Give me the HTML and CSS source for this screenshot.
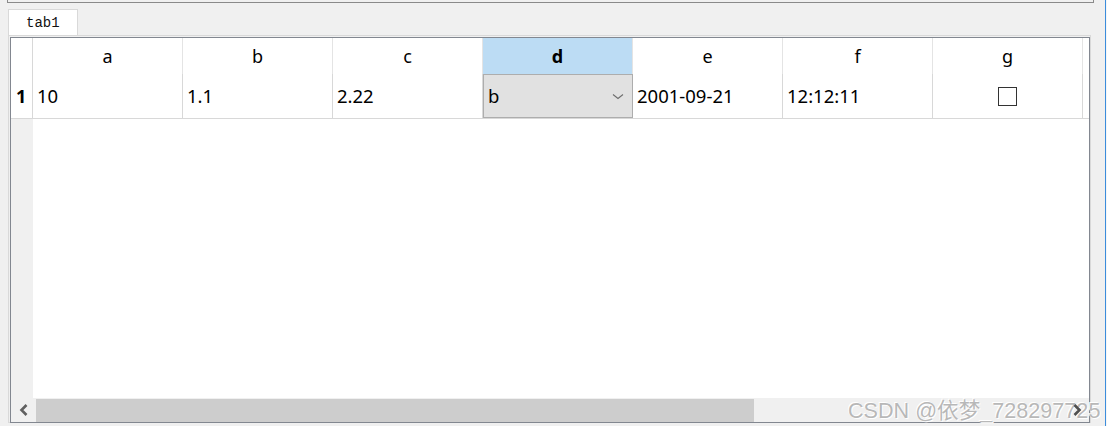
FILE: index.html
```html
<!DOCTYPE html>
<html>
<head>
<meta charset="utf-8">
<link rel="stylesheet" href="styles.css">
</head>
<body>
<div class="window">
  <div class="main">
    <div class="topframe"></div>
    <div class="tabbar"><div class="tab">tab1</div></div>
    <div class="pane">
      <div class="table">
        <div class="hrow">
          <div class="corner"></div>
          <div class="hcell">a</div>
          <div class="hcell">b</div>
          <div class="hcell">c</div>
          <div class="hcell sel">d</div>
          <div class="hcell">e</div>
          <div class="hcell">f</div>
          <div class="hcell">g</div>
          <div class="hfill"></div>
        </div>
        <div class="row">
          <div class="vh">1</div>
          <div class="cell">10</div>
          <div class="cell">1.1</div>
          <div class="cell">2.22</div>
          <div class="cell combo-cell">
            <div class="combo">
              <span>b</span>
              <svg class="chev" width="12" height="7" viewBox="0 0 12 7"><path d="M1 1.5 L6 5.5 L11 1.5" fill="none" stroke="#6d6d6d" stroke-width="1.1"/></svg>
            </div>
          </div>
          <div class="cell">2001-09-21</div>
          <div class="cell">12:12:11</div>
          <div class="cell center"><span class="check"></span></div>
          <div class="rfill"></div>
        </div>
        <div class="body">
          <div class="vfill"></div>
          <div class="bfill"></div>
        </div>
        <div class="hscroll">
          <div class="sbtn">
            <svg width="12" height="14" viewBox="0 0 12 14"><path d="M8.5 2 L3.5 7 L8.5 12" fill="none" stroke="#606060" stroke-width="2.6"/></svg>
          </div>
          <div class="track"><div class="thumb"></div></div>
          <div class="sbtn">
            <svg width="12" height="14" viewBox="0 0 12 14"><path d="M3.5 2 L8.5 7 L3.5 12" fill="none" stroke="#505050" stroke-width="2.6"/></svg>
          </div>
        </div>
      </div>
    </div>
  </div>
  <div class="vline"></div>
  <div class="edge"></div>
  <div class="watermark">CSDN @依梦_728297725</div>
</div>
</body>
</html>
```
FILE: styles.css
```css
html, body {
  margin: 0;
  padding: 0;
  background: #f0f0f0;
}
.window {
  position: relative;
  display: flex;
  width: 1107px;
  height: 426px;
  overflow: hidden;
  font-family: "Noto Sans", "Noto Sans CJK SC", sans-serif;
  color: #000;
}
.main {
  width: 1105px;
  flex: none;
}
.vline {
  width: 1px;
  background: #3c8ddc;
  flex: none;
}
.edge {
  width: 1px;
  background: #f6f6f6;
  flex: none;
}
.topframe {
  margin-left: 7px;
  width: 1085px;
  height: 2px;
  border: 1px solid #8a8a8a;
  border-top: none;
}
.tabbar {
  margin-top: 6px;
  padding-left: 8px;
  height: 26px;
}
.tab {
  width: 70px;
  height: 26px;
  box-sizing: border-box;
  background: #fff;
  border: 1px solid #d9d9d9;
  border-bottom: none;
  font-family: "Liberation Mono", monospace;
  font-size: 14px;
  line-height: 26px;
  padding-left: 17px;
  color: #111;
}
.pane {
  margin-left: 8px;
  width: 1083px;
  height: 388px;
  box-sizing: border-box;
  border: 1px solid #d9d9d9;
  padding: 1px;
}
.table {
  width: 1080px;
  height: 386px;
  box-sizing: border-box;
  border: 1px solid #828790;
  background: #fff;
  display: flex;
  flex-direction: column;
}
.hrow, .row, .body {
  display: flex;
  flex: none;
}
.hrow {
  height: 36px;
}
.corner {
  width: 22px;
  box-sizing: border-box;
  border-right: 1px solid #d8d8d8;
}
.hcell {
  width: 150px;
  box-sizing: border-box;
  border-right: 1px solid #e4e4e4;
  text-align: center;
  font-size: 18px;
  line-height: 36px;
}
.hcell.sel {
  background: #bcdcf4;
  font-weight: bold;
}
.hfill, .rfill {
  flex: 1;
}
.row {
  height: 45px;
  box-sizing: border-box;
  border-bottom: 1px solid #d8d8d8;
}
.vh {
  width: 22px;
  box-sizing: border-box;
  border-right: 1px solid #d8d8d8;
  font-weight: bold;
  font-size: 18px;
  line-height: 44px;
  padding-left: 5px;
}
.cell {
  width: 150px;
  box-sizing: border-box;
  border-right: 1px solid #d8d8d8;
  padding-left: 4px;
  font-size: 18.5px;
  line-height: 44px;
  white-space: nowrap;
}
.cell.center {
  padding-left: 0;
  display: flex;
  align-items: center;
  justify-content: center;
}
.check {
  display: block;
  width: 19px;
  height: 19px;
  box-sizing: border-box;
  border: 1.5px solid #333;
  margin-left: -1px;
}
.combo-cell {
  padding-left: 0;
  border-right: none;
}
.combo {
  height: 44px;
  box-sizing: border-box;
  border: 1px solid #adadad;
  background: #e1e1e1;
  display: flex;
  align-items: center;
  justify-content: space-between;
  padding: 0 8px 0 4px;
  line-height: 42px;
}
.chev {
  display: block;
  margin-top: 1px;
}
.body {
  flex: 1;
}
.vfill {
  width: 22px;
  background: #f0f0f0;
}
.bfill {
  flex: 1;
}
.hscroll {
  height: 24px;
  flex: none;
  display: flex;
  background: #f0f0f0;
}
.sbtn {
  width: 25px;
  display: flex;
  align-items: center;
  justify-content: center;
  flex: none;
  position: relative;
  z-index: 2;
}
.track {
  flex: 1;
  padding-top: 1px;
}
.thumb {
  width: 718px;
  height: 23px;
  background: #cdcdcd;
}
.watermark {
  position: absolute;
  z-index: 1;
  left: 848px;
  top: 393px;
  font-family: "Liberation Sans", "Noto Sans CJK SC", sans-serif;
  font-size: 21.6px;
  color: #b8b8b8;
  text-shadow: 0 0 1px #fff, 1px 1px 0 #fff, -1px -1px 0 #fff;
  white-space: nowrap;
}
```
